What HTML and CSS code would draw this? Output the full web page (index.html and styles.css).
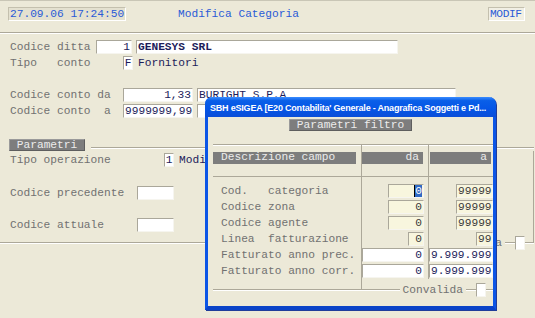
FILE: index.html
```html
<!DOCTYPE html>
<html lang="it">
<head>
    <meta charset="UTF-8">
    <meta name="viewport" content="width=device-width, initial-scale=1.0">
    <title>Modifica Categoria</title>
    <link rel="stylesheet" href="styles.css">
</head>
<body>
    <div class="screen">
        <header class="topbar">
            <span class="clock">27.09.06 17:24:50</span>
            <span class="title">Modifica Categoria</span>
            <span class="mode">MODIF</span>
        </header>

        <!-- testata: ditta e conti -->
        <section class="head-form">
            <div class="row">
                <span class="lbl w-ditta">Codice ditta</span>
                <span class="fld num" style="width:36px">1</span>
                <span class="fld desc bold" style="width:262px">GENESYS SRL</span>
            </div>
            <div class="row">
                <span class="lbl w-conto">Tipo   conto</span>
                <span class="fld one">F</span>
                <span class="val">Fornitori</span>
            </div>
            <div class="row gap-big">
                <span class="lbl w-conto">Codice conto da</span>
                <span class="fld num" style="width:70px">1,33</span>
                <span class="fld desc" style="width:259px">BURIGHT S.P.A</span>
            </div>
            <div class="row">
                <span class="lbl w-conto">Codice conto  a</span>
                <span class="fld num" style="width:70px">9999999,99</span>
                <span class="fld desc" style="width:259px"></span>
            </div>
        </section>

        <!-- gruppo parametri -->
        <section class="group">
            <div class="group-head">
                <span class="tab">Parametri</span>
                <span class="rule"></span>
            </div>
            <div class="group-body">
                <div class="row">
                    <span class="lbl w-tipo">Tipo operazione</span>
                    <span class="fld one">1</span>
                    <span class="val">Modi</span>
                </div>
                <div class="row gap-mid">
                    <span class="lbl w-cod">Codice precedente</span>
                    <span class="fld" style="width:37px"></span>
                </div>
                <div class="row gap-std">
                    <span class="lbl w-cod">Codice attuale</span>
                    <span class="fld" style="width:37px"></span>
                </div>
                <div class="validate main-validate">
                    <span class="validate-lbl">a</span>
                    <span class="chk"></span>
                </div>
            </div>
        </section>

        <!-- finestra filtro -->
        <div class="dialog">
            <div class="titlebar">SBH eSIGEA [E20 Contabilita' Generale - Anagrafica Soggetti e Pd...</div>
            <div class="ftab">Parametri filtro</div>
            <div class="dgroup">
                <div class="drow dhead">
                    <div class="c1"><span class="bar">Descrizione campo</span></div>
                    <div class="c2"><span class="bar right">da</span></div>
                    <div class="c3"><span class="bar right">a</span></div>
                </div>
                <div class="drow dspace"><div class="c1"></div><div class="c2"></div><div class="c3"></div></div>
                <div class="drow">
                    <div class="c1 lbl">Cod.   categoria</div>
                    <div class="c2"><span class="fld num soft" style="width:36px"><span class="sel">0</span></span></div>
                    <div class="c3"><span class="fld num soft" style="width:37px">99999</span></div>
                </div>
                <div class="drow">
                    <div class="c1 lbl">Codice zona</div>
                    <div class="c2"><span class="fld num soft" style="width:36px">0</span></div>
                    <div class="c3"><span class="fld num soft" style="width:37px">99999</span></div>
                </div>
                <div class="drow">
                    <div class="c1 lbl">Codice agente</div>
                    <div class="c2"><span class="fld num soft" style="width:36px">0</span></div>
                    <div class="c3"><span class="fld num soft" style="width:37px">99999</span></div>
                </div>
                <div class="drow">
                    <div class="c1 lbl">Linea  fatturazione</div>
                    <div class="c2"><span class="fld num soft" style="width:16px">0</span></div>
                    <div class="c3"><span class="fld num soft" style="width:17px">99</span></div>
                </div>
                <div class="drow">
                    <div class="c1 lbl">Fatturato anno prec.</div>
                    <div class="c2"><span class="fld num" style="width:63px">0</span></div>
                    <div class="c3"><span class="fld num" style="width:64px">9.999.999</span></div>
                </div>
                <div class="drow">
                    <div class="c1 lbl">Fatturato anno corr.</div>
                    <div class="c2"><span class="fld num" style="width:63px">0</span></div>
                    <div class="c3"><span class="fld num" style="width:64px">9.999.999</span></div>
                </div>
                <div class="drow dfoot"><div class="c1"></div><div class="c2"></div><div class="c3 open"></div></div>
                <div class="validate dlg-validate">
                    <span class="validate-lbl">Convalida</span>
                    <span class="chk"></span>
                </div>
            </div>
        </div>
    </div>
</body>
</html>
```

FILE: styles.css
```css
/* Maschera gestionale stile Windows XP */
body {
    margin: 0;
    background-color: #ece9d8;
    font-family: "Liberation Mono", "DejaVu Sans Mono", monospace;
    font-size: 11.2px;
    line-height: 12px;
}
.screen {
    position: relative;
    width: 535px;
    height: 318px;
    overflow: hidden;
    background-color: #ece9d8;
    border-top: 1px solid #c9c6b6;
    box-sizing: border-box;
}

/* barra superiore */
.topbar {
    display: flex;
    align-items: flex-start;
    height: 32px;
    box-sizing: border-box;
    padding: 6px 10px 0 8px;
    border-bottom: 1px solid #aca899;
    box-shadow: 0 1px 0 #fff;
    color: #2a5bd7;
    white-space: nowrap;
}
.clock, .mode {
    height: 14px;
    box-sizing: border-box;
    padding: 0 1px;
    border: 1px solid;
    border-color: #c4c0ae #fff #fff #c4c0ae;
}
.clock {
    width: 118px;
    background-color: #e4e1d0;
}
.title {
    margin-left: 52px;
    margin-top: 1px;
}
.mode {
    margin-left: auto;
    width: 37px;
    background-color: #f1efe4;
    letter-spacing: -0.4px;
}

/* righe */
.row {
    display: flex;
    align-items: center;
    height: 16px;
}
.lbl {
    color: #717171;
    white-space: pre;
}
.w-ditta { width: 86px; }
.w-conto { width: 113px; }
.w-tipo { width: 154px; }
.w-cod { width: 127px; }
.val {
    margin-left: 5px;
    color: #1c1c5a;
    white-space: nowrap;
}

.fld {
    display: inline-block;
    height: 14px;
    box-sizing: border-box;
    padding: 0 1px;
    background-color: #fff;
    border: 1px solid;
    border-color: #aaa79a #f6f5ef #f6f5ef #aaa79a;
    color: #1c1c5a;
    white-space: pre;
    overflow: hidden;
}
.fld.num { text-align: right; }
.fld.desc { margin-left: 3px; }
.fld.bold { font-weight: bold; }
.fld.one { width: 10px; padding: 0; text-align: center; }
.fld.soft { background-color: #f8f6de; color: #3a3a3a; }
.row .fld.num + .fld.desc { margin-left: 4px; }

.head-form {
    padding: 6px 0 0 10px;
}
.gap-big { margin-top: 16px; }
.gap-mid { margin-top: 17px; }
.gap-std { margin-top: 16px; }

/* gruppo parametri */
.group {
    width: 534px;
    margin-top: 20px;
}
.group-head {
    display: flex;
    height: 12px;
}
.tab, .ftab {
    height: 12px;
    box-sizing: border-box;
    padding: 0;
    background-color: #7d7d7d;
    border: 1px solid;
    border-color: #9a9a9a #5e5e5e #5e5e5e #9a9a9a;
    color: #ececec;
    line-height: 10px;
    text-align: center;
}
.tab {
    width: 76px;
    margin-left: 9px;
}
.rule {
    flex: 1;
    height: 0;
    margin: 8px 0 0 6px;
    border-top: 1px solid #aca899;
    border-bottom: 1px solid #fff;
}
.group-body {
    position: relative;
    padding: 1px 0 9px 10px;
    border-right: 1px solid #aca899;
    border-bottom: 1px solid #aca899;
    box-shadow: 0 1px 0 #fff;
}

/* convalida sul bordo */
.validate {
    position: absolute;
    display: flex;
    align-items: center;
}
.validate-lbl {
    padding: 0 3px;
    background-color: #ece9d8;
    color: #717171;
}
.chk {
    width: 10px;
    height: 14px;
    margin-left: 10px;
    box-sizing: border-box;
    background-color: #fff;
    border: 1px solid;
    border-color: #aaa79a #f6f5ef #f6f5ef #aaa79a;
}
.main-validate {
    right: 8px;
    bottom: -8px;
}
.dlg-validate {
    right: 7px;
    bottom: -8px;
}

/* finestra filtro */
.dialog {
    position: absolute;
    left: 205px;
    top: 96px;
    width: 291px;
    height: 213px;
    box-sizing: border-box;
    background-color: #ece9d8;
    border: 3px solid #0b55e6;
    border-top: 0;
    border-bottom: 4px solid #0a43c8;
    border-radius: 7px 7px 0 0;
    box-shadow: 1px 1px 0 #1f3c9a;
}
.titlebar {
    height: 20px;
    margin: 0 -3px;
    padding-left: 5px;
    border-radius: 7px 7px 0 0;
    background: linear-gradient(#3a8cff 0%, #0a5fe8 18%, #0555e6 60%, #0b4ed8 100%);
    color: #fff;
    font-family: "Liberation Sans", Arial, sans-serif;
    font-size: 9px;
    font-weight: bold;
    letter-spacing: -0.2px;
    line-height: 22px;
    white-space: nowrap;
    overflow: hidden;
}
.ftab {
    width: 123px;
    margin: 2px auto 0;
}
.dgroup {
    position: relative;
    margin: 13px 0 0 5px;
    border-top: 1px solid #aca899;
    border-bottom: 1px solid #aca899;
    box-shadow: 0 1px 0 #fff, inset 0 1px 0 #fff;
}
.drow {
    display: grid;
    grid-template-columns: 148px 67px 65px;
    height: 16px;
    align-items: center;
}
.drow > div {
    display: flex;
    align-items: center;
    height: 100%;
    box-sizing: border-box;
}
.drow .c1 { padding-left: 8px; }
.drow .c2 {
    justify-content: flex-end;
    padding-right: 4px;
    border-left: 1px solid #aca899;
}
.drow .c3 {
    justify-content: flex-end;
    border-left: 1px solid #aca899;
}
.drow .c3.open { border-left-color: transparent; }
.dhead {
    height: 31px;
    border-bottom: 1px solid #aca899;
}
.dhead > div { align-items: flex-start; }
.dhead .c1 { padding: 7px 5px 0 0; }
.dhead .c2 { padding: 7px 5px 0 0; }
.dhead .c3 { padding: 7px 2px 0 1px; }
.bar {
    flex: 1;
    height: 12px;
    padding: 0 8px;
    background-color: #7d7d7d;
    color: #ececec;
    line-height: 11px;
}
.bar.right {
    text-align: right;
    padding: 0 4px;
}
.dspace { height: 6px; }
.dfoot { height: 10px; }

.sel {
    display: inline-block;
    height: 12px;
    background-color: #316ac5;
    color: #fff;
    border-left: 1px solid #000;
}
```
